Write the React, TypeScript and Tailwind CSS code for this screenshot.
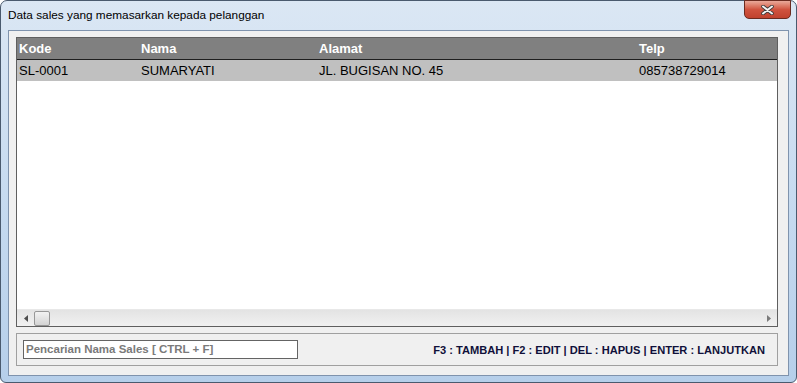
import { type JSX } from "react"

const rows = [
    { kode: "SL-0001", nama: "SUMARYATI", alamat: "JL. BUGISAN NO. 45", telp: "085738729014" },
]

function DataSales(): JSX.Element {
    return (
        <div className="w-[797px] h-[383px] bg-white">
            {/* bingkai jendela */}
            <div className="w-[797px] h-[383px] flex flex-col rounded-t-[7px] rounded-b-[6px] border border-[#4a5a6e] bg-gradient-to-b from-[#dbe7f4] via-[#c7dbf0] to-[#b6cfea] font-['Liberation_Sans',sans-serif]">
                <div className="h-[29px] flex items-start justify-between pl-[7px] pr-[5px]">
                    <span className="text-[11.8px] text-black mt-[6px]">Data sales yang memasarkan kepada pelanggan</span>
                    <button className="w-[47px] h-[19px] -mt-px rounded-b-[5px] border border-[#6b2b20] bg-gradient-to-b from-[#e9a99a] via-[#d0533f] to-[#c0422e] flex items-center justify-center">
                        <svg width="13" height="10" viewBox="0 0 13 10">
                            <path d="M2 1.5 L11 8.5 M11 1.5 L2 8.5" stroke="#3a3a3a" strokeWidth="3.6" strokeLinecap="round" />
                            <path d="M2 1.5 L11 8.5 M11 1.5 L2 8.5" stroke="#f4f4f4" strokeWidth="2" strokeLinecap="round" />
                        </svg>
                    </button>
                </div>

                <div className="mx-[7px] h-[346px] bg-[#f0f0f0] border border-[#7f93ad] flex flex-col pt-[6px] pl-[7px] pr-[10px]">
                    <div className="h-[290px] border border-[#5f5f5f] bg-white flex flex-col">
                        <div className="h-[22px] bg-[#808080] border-b border-[#1e1e1e] flex items-center text-[13px] font-bold text-white">
                            <div className="w-[122px] pl-[2px]">Kode</div>
                            <div className="w-[178px] pl-[2px]">Nama</div>
                            <div className="w-[320px] pl-[2px]">Alamat</div>
                            <div className="flex-1 pl-[2px]">Telp</div>
                        </div>
                        <div className="flex-1">
                            {rows.map((r) => (
                                <div key={r.kode} className="h-[21px] bg-[#c0c0c0] flex items-center text-[13px] text-black">
                                    <div className="w-[122px] pl-[2px]">{r.kode}</div>
                                    <div className="w-[178px] pl-[2px]">{r.nama}</div>
                                    <div className="w-[320px] pl-[2px]">{r.alamat}</div>
                                    <div className="flex-1 pl-[2px]">{r.telp}</div>
                                </div>
                            ))}
                        </div>
                        {/* scrollbar horizontal */}
                        <div className="h-[17px] bg-gradient-to-b from-[#e3e3e3] to-[#f1f1f1] border-t border-[#e8e8e8] flex items-center">
                            <div className="w-[17px] flex items-center justify-center">
                                <svg width="4" height="7" viewBox="0 0 4 7"><path d="M4 0 L0 3.5 L4 7 Z" fill="#4d4d4d" /></svg>
                            </div>
                            <div className="w-[16px] h-[15px] rounded-[2px] border border-[#979797] bg-gradient-to-b from-[#f2f2f2] to-[#d4d4d4]"></div>
                            <div className="flex-1"></div>
                            <div className="w-[17px] flex items-center justify-center">
                                <svg width="4" height="7" viewBox="0 0 4 7"><path d="M0 0 L4 3.5 L0 7 Z" fill="#7a7a7a" /></svg>
                            </div>
                        </div>
                    </div>

                    <div className="mt-[6px] h-[33px] border border-[#a0a0a0] flex items-center justify-between pl-[6px] pr-[12px]">
                        <div className="w-[275px] h-[19px] bg-white border border-[#646464] flex items-center pl-[2px] text-[11.5px] font-bold text-[#7a7a7a]">
                            Pencarian Nama Sales [ CTRL + F]
                        </div>
                        <div className="text-[11.1px] font-bold text-[#10103a] mt-[1px]">
                            F3 : TAMBAH | F2 : EDIT | DEL : HAPUS | ENTER : LANJUTKAN
                        </div>
                    </div>
                </div>
            </div>
        </div>
    )
}

export default DataSales
